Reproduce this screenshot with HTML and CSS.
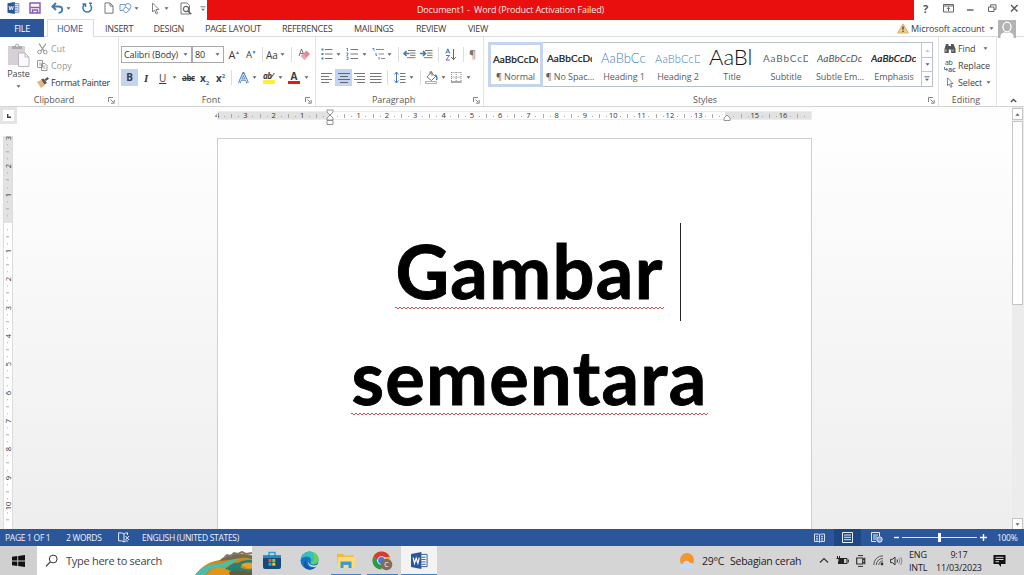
FILE: index.html
```
<!DOCTYPE html>
<html lang="en">
<head>
<meta charset="utf-8">
<title>Document1 - Word</title>
<link rel="stylesheet" href="styles.css">
</head>
<body>
<svg class="defs" width="0" height="0">
  <defs>
    <symbol id="dd" viewBox="0 0 5 3"><path d="M.5.3h4L2.500 2.700z" fill="#666"/></symbol>
    <symbol id="launch" viewBox="0 0 7 7"><path d="M.5 5V.5H5M2.500 2.500l3 3M6.200 3v3.200H3" fill="none" stroke="#777" stroke-width=".9"/></symbol>
    <symbol id="word" viewBox="0 0 18 18"><path d="M9 2.500h8v13H9z" fill="#fff" stroke="#2b579a"/><path d="M11 5.500h4.500M11 8h4.500M11 10.500h4.500M11 13h4.500" stroke="#2b579a"/><path d="M0 2l11-2v18L0 16z" fill="#2b579a"/><path d="M2.300 6l1.400 6 1.800-5.500L7.300 12l1.400-6" fill="none" stroke="#fff" stroke-width="1.300"/></symbol>
  </defs>
</svg>
<div class="app">
  <header class="titlebar">
    <div class="qat">
      <svg width="13" height="12"><use href="#word"/></svg>
      <svg width="12" height="12" viewBox="0 0 12 12"><path d="M1 1h10v10H1z" fill="#fff" stroke="#8a5aa8" stroke-width="1.500"/><path d="M1.500 5.500h9M3.500 11V8h5v3" fill="none" stroke="#8a5aa8" stroke-width="1.500"/></svg>
      <svg width="13" height="12" viewBox="0 0 13 12"><path d="M1.500 4.500h6c5 0 5 6 0 6.300M5 1L1.300 4.500 5 8" fill="none" stroke="#3c78b8" stroke-width="1.800"/></svg>
      <svg width="5" height="3"><use href="#dd"/></svg>
      <svg width="12" height="12" viewBox="0 0 12 12"><path d="M3.800 2.200A4.300 4.300 0 1 0 9 2.500M1.500 2h3v3M8 1.200h3" fill="none" stroke="#3c78b8" stroke-width="1.500"/></svg>
      <svg width="10" height="12" viewBox="0 0 10 12"><path d="M1 .9h5l3 3v7.300H1zM6 1v3h3" fill="#fff" stroke="#777"/></svg>
      <svg width="14" height="12" viewBox="0 0 14 12"><path d="M1 2.500h7v6H1z" fill="#fff" stroke="#6c9bce"/><circle cx="9" cy="4.500" r="3" fill="#fff" stroke="#6c9bce"/><path d="M7 5l3.500 3L7 11 3.500 8z" fill="#fff" stroke="#6c9bce"/></svg>
      <svg width="5" height="3"><use href="#dd"/></svg>
      <svg width="9" height="13" viewBox="0 0 9 13"><path d="M1.500 1v9l2-2 1.700 4 1.500-.7L5 7.500h3z" fill="#fff" stroke="#777" stroke-width=".9"/></svg>
      <svg width="5" height="3"><use href="#dd"/></svg>
      <svg width="12" height="13" viewBox="0 0 12 13"><path d="M1 1h6l2.500 2.500V12H1z" fill="#fff" stroke="#777"/><circle cx="6" cy="7" r="2.600" fill="#fff" stroke="#666" stroke-width="1.200"/><path d="M8 9l3.300 3.300" stroke="#666" stroke-width="1.600"/></svg>
      <svg class="more" width="6" height="6" viewBox="0 0 6 6"><path d="M.5.8h5" stroke="#777"/><path d="M1 2.800h4L3 5z" fill="#777"/></svg>
    </div>
    <div class="caption"><span>Document1 -&nbsp; Word (Product Activation Failed)</span></div>
    <div class="winbtns">
      <b>?</b>
      <svg width="11" height="9" viewBox="0 0 11 9"><path d="M.5.5h10v7.500H.5zM.5 2h10M5.500 7V3.500M3.800 5l1.700-1.600L7.200 5" fill="none" stroke="#666"/></svg>
      <svg width="7" height="9" viewBox="0 0 7 9"><path d="M0 6h6.500" stroke="#666" stroke-width="1.500"/></svg>
      <svg width="9" height="9" viewBox="0 0 9 9"><path d="M.5 3h5.500v4.500H.5zM2.500 3V.8h5.500v4.500H6" fill="none" stroke="#666"/></svg>
      <svg width="9" height="9" viewBox="0 0 9 9"><path d="M1 1l6.500 6.500M7.500 1L1 7.500" stroke="#555" stroke-width="1.400"/></svg>
    </div>
  </header>

  <nav class="tabs">
    <span class="file">FILE</span><span class="home">HOME</span><span>INSERT</span><span>DESIGN</span><span>PAGE LAYOUT</span><span>REFERENCES</span><span>MAILINGS</span><span>REVIEW</span><span>VIEW</span>
    <div class="account">
      <svg width="12" height="11" viewBox="0 0 12 11"><path d="M6 .8L11.400 10H.6z" fill="#f0c987" stroke="#dfb269"/><path d="M6 3.500v3.300M6 7.800v1.300" stroke="#333" stroke-width="1.200"/></svg>
      <span>Microsoft account</span>
      <svg width="5" height="3"><use href="#dd"/></svg>
      <svg class="avatar" width="18" height="18" viewBox="0 0 18 18"><path d="M0 0h18v18H0z" fill="#b4b4b4"/><ellipse cx="9" cy="7" rx="4" ry="4.800" fill="#b4b4b4" stroke="#fff" stroke-width="1.300"/><path d="M2.500 18v-2c0-2 1.500-3 4-3.800 1.500 1 3.500 1 5 0 2.500.8 4 1.800 4 3.800v2z" fill="#fff"/></svg>
    </div>
  </nav>

  <section class="ribbon">
    <div class="group clipboard">
      <div class="body">
        <div class="paste">
          <svg width="23" height="24" viewBox="0 0 23 24"><path d="M1 3h17v19H1z" fill="#d5d1d5"/><path d="M5 6V3h3c0-3 4-3 4 0h3v3z" fill="#aaa"/><circle cx="10" cy="2.800" r="1" fill="#fff"/><path d="M11.500 10h6.500l4 4v9.500H11.500z" fill="#fbf8fd" stroke="#bdb6bf"/><path d="M18 10v4h4" fill="none" stroke="#bdb6bf"/></svg>
          <span>Paste</span>
          <svg width="5" height="3"><use href="#dd"/></svg>
        </div>
        <ul class="clips">
          <li class="off"><svg width="11" height="12" viewBox="0 0 11 12"><path d="M2 .5l5 7.500M9 .5L4 8" stroke="#999" stroke-width="1.300"/><circle cx="2.500" cy="9" r="1.800" fill="none" stroke="#999"/><circle cx="8.300" cy="9" r="1.800" fill="none" stroke="#999"/></svg><span>Cut</span></li>
          <li class="off"><svg width="11" height="11" viewBox="0 0 11 11"><path d="M.5.5h5v7h-5zM4.500 3.500h3.500l2 2v5H4.500z" fill="#fff" stroke="#999"/><path d="M2 3h2M2 5h2M6 6h2.500M6 8h2.500" stroke="#999" stroke-width=".8"/></svg><span>Copy</span></li>
          <li><svg width="12" height="11" viewBox="0 0 12 11"><path d="M0 5l4-2 4 5-4 3z" fill="#e8b478"/><path d="M4 2.500l3.500 5L10 6 6.500 1.500zM7.500 2.500L10.500 0l1.500 1.700L9 4z" fill="#555"/></svg><span>Format Painter</span></li>
        </ul>
      </div>
      <footer><span>Clipboard</span><svg width="7" height="7"><use href="#launch"/></svg></footer>
    </div>

    <div class="group font">
      <div class="body rows">
        <div class="row f1">
          <div class="combo name"><span>Calibri (Body)</span><svg width="5" height="3"><use href="#dd"/></svg></div>
          <div class="combo size"><span>80</span><svg width="5" height="3"><use href="#dd"/></svg></div>
          <span class="grow">A<sup>▲</sup></span><span class="shrink">A<sup>▼</sup></span><i class="sep"></i>
          <span class="aa">Aa</span><svg width="5" height="3"><use href="#dd"/></svg><i class="sep"></i>
          <svg width="12" height="13" viewBox="0 0 12 13"><path d="M1 8l2.500-7L6 7M2 5.500h3" fill="none" stroke="#777"/><path d="M3 8l5.500-5.500L12 6l-5.500 6z" fill="#dd8a9c"/><path d="M3 8l2.200-2.200L8.700 9.500 6.500 12z" fill="#eba5b2"/></svg>
        </div>
        <div class="row f2">
          <b class="on">B</b><em>I</em><u>U</u><svg width="5" height="3"><use href="#dd"/></svg><s>abc</s><b class="xx">x<sub>2</sub></b><b class="xx">x<sup>2</sup></b><i class="sep"></i>
          <svg width="11" height="12" viewBox="0 0 11 12"><path d="M1.200 11L5.400 1.500 9.700 11M2.800 7.800h5.200" fill="none" stroke="#4a82c2" stroke-width="2.500"/><path d="M1.400 10.600L5.400 2 9.500 10.600M2.800 7.800h5.200" fill="none" stroke="#fff" stroke-width=".8"/></svg><svg width="5" height="3"><use href="#dd"/></svg>
          <span class="mark">ab⁄</span><svg width="5" height="3"><use href="#dd"/></svg>
          <span class="color">A</span><svg width="5" height="3"><use href="#dd"/></svg>
        </div>
      </div>
      <footer><span>Font</span><svg width="7" height="7"><use href="#launch"/></svg></footer>
    </div>

    <div class="group para">
      <div class="body rows">
        <div class="row p1">
          <svg width="12" height="12" viewBox="0 0 12 12"><path d="M4 1.500h7.500M4 6h7.500M4 10.500h7.500" stroke="#777"/><path d="M.5.500h2v2h-2zM.5 5h2v2h-2zM.5 9.500h2v2h-2z" fill="#4a82c2"/></svg><svg width="5" height="3"><use href="#dd"/></svg>
          <svg width="12" height="12" viewBox="0 0 12 12"><path d="M4.500 1.500H12M4.500 6H12M4.500 10.500H12" stroke="#777"/><path d="M.5.5h1V3M.5 5h1.500v1L.7 7.200H2.200M.5 9h1.500v2.400H.5" fill="none" stroke="#4a82c2"/></svg><svg width="5" height="3"><use href="#dd"/></svg>
          <svg width="13" height="12" viewBox="0 0 13 12"><path d="M4 1.500h8M6.500 6h5.500M9 10.500h4" stroke="#888"/><path d="M.5.500h1.500v2.200M4 5v2.500h1M7 9v2.500" fill="none" stroke="#4a82c2"/></svg><svg width="5" height="3"><use href="#dd"/></svg><i class="sep"></i>
          <svg width="13" height="10" viewBox="0 0 13 10"><path d="M5 1.500h7.500M7 4h5.500M7 6.300h5.500M4 8.700h8.500" stroke="#777"/><path d="M6.500 4.500H1.500M3.500 2L1 4.500 3.500 7" fill="none" stroke="#3c78b8" stroke-width="1.500"/></svg>
          <svg width="13" height="10" viewBox="0 0 13 10"><path d="M5 1.500h7.500M7 4h5.500M7 6.300h5.500M4 8.700h8.500" stroke="#777"/><path d="M0 4.500h5M3 2l2.500 2.500L3 7" fill="none" stroke="#3c78b8" stroke-width="1.500"/></svg><i class="sep"></i>
          <svg width="12" height="13" viewBox="0 0 12 13"><path d="M.8 5.500L2.800.8l2 4.700M1.500 4h2.600" fill="none" stroke="#3c78b8"/><path d="M1 7.500h3.500L1 12h3.800" fill="none" stroke="#8a5aa8"/><path d="M8.500 1v10.500M6.200 9l2.300 2.500L10.800 9" fill="none" stroke="#666"/></svg><i class="sep"></i>
          <span class="pil">¶</span>
        </div>
        <div class="row p2">
          <svg width="12" height="10" viewBox="0 0 12 10"><path d="M0 .5h11M0 3.500h8M0 6.500h11M0 9.500h8" stroke="#777"/></svg>
          <span class="on"><svg width="12" height="10" viewBox="0 0 12 10"><path d="M0 .5h12M2 3.500h8M0 6.500h12M2 9.500h8" stroke="#666"/></svg></span>
          <svg width="12" height="10" viewBox="0 0 12 10"><path d="M0 .5h11M3 3.500h8M0 6.500h11M3 9.500h8" stroke="#777"/></svg>
          <svg width="12" height="10" viewBox="0 0 12 10"><path d="M0 .5h11.500M0 3.500h11.500M0 6.500h11.500M0 9.500h11.500" stroke="#777"/></svg><i class="sep"></i>
          <svg width="12" height="13" viewBox="0 0 12 13"><path d="M2.500 1v11M.5 3.500l2-2.500 2 2.500M.5 9.500l2 2.500 2-2.500" fill="none" stroke="#3c78b8"/><path d="M6 2.500h5.500M6 5.500h5.500M6 8.500h5.500M6 11.500h5.500" stroke="#777"/></svg><svg width="5" height="3"><use href="#dd"/></svg><i class="sep"></i>
          <svg width="13" height="13" viewBox="0 0 13 13"><path d="M2 6l4-4.500 4.500 4L6.500 9.500zM5 3V.8h2V5" fill="#fff" stroke="#777"/><path d="M10 4c2.500 1 2 4 1.500 5" fill="none" stroke="#3c78b8" stroke-width="1.400"/><path d="M.5 10.500h11v2H.5z" fill="#fff" stroke="#999" stroke-width=".8"/></svg><svg width="5" height="3"><use href="#dd"/></svg>
          <svg width="11" height="11" viewBox="0 0 11 11"><path d="M.5.5h9.500M.5 5.200h9.500M.5 0v10M5.200 0v10M10 0v10" fill="none" stroke="#888" stroke-dasharray="1 1"/><path d="M0 10h10.500" stroke="#555"/></svg><svg width="5" height="3"><use href="#dd"/></svg>
        </div>
      </div>
      <footer><span>Paragraph</span><svg width="7" height="7"><use href="#launch"/></svg></footer>
    </div>

    <div class="group styles">
      <div class="body">
        <div class="gallery">
          <div class="st sel"><p class="n">AaBbCcDc</p><small>¶ Normal</small></div>
          <div class="st"><p class="n">AaBbCcDc</p><small>¶ No Spac...</small></div>
          <div class="st"><p class="h1">AaBbCc</p><small>Heading 1</small></div>
          <div class="st"><p class="h2">AaBbCcD</p><small>Heading 2</small></div>
          <div class="st"><p class="t">AaBl</p><small>Title</small></div>
          <div class="st"><p class="sub">AaBbCcD</p><small>Subtitle</small></div>
          <div class="st"><p class="se">AaBbCcDc</p><small>Subtle Em...</small></div>
          <div class="st"><p class="em">AaBbCcDc</p><small>Emphasis</small></div>
          <div class="updown">
            <span><svg width="5" height="3" viewBox="0 0 5 3"><path d="M.5 2.700h4L2.500.5z" fill="#bbb"/></svg></span>
            <span><svg width="5" height="3"><use href="#dd"/></svg></span>
            <span><svg width="6" height="6" viewBox="0 0 6 6"><path d="M.5.8h5" stroke="#666"/><path d="M1 2.800h4L3 5z" fill="#666"/></svg></span>
          </div>
        </div>
      </div>
      <footer><span>Styles</span><svg width="7" height="7"><use href="#launch"/></svg></footer>
    </div>

    <div class="group editing">
      <ul class="clips">
        <li><svg width="12" height="11" viewBox="0 0 12 11"><path d="M2 1h2.500v2H7V1h2.500l2 5v4H7.200V6.500H4.800V10H.5V6z" fill="#555"/><path d="M2 6.500v2M9 6.500v2" stroke="#fff" stroke-width=".8"/></svg><span>Find</span><svg width="5" height="3"><use href="#dd"/></svg></li>
        <li><span class="abac"><i>ab</i><b><svg width="4" height="5" viewBox="0 0 4 5"><path d="M.5 0v2.500h3M2.300 1l1.400 1.500L2.300 4" fill="none" stroke="#4c79ac" stroke-width=".9"/></svg>ac</b></span><span>Replace</span></li>
        <li><svg width="12" height="11" viewBox="0 0 12 11"><path d="M3.500.8v8l1.700-1.700 1.500 3.200 1.300-.6-1.500-3.200H9z" fill="#fff" stroke="#777" stroke-width=".9"/></svg><span>Select</span><svg width="5" height="3"><use href="#dd"/></svg></li>
      </ul>
      <footer><span>Editing</span></footer>
    </div>
    <div class="collapse"><svg width="7" height="5" viewBox="0 0 7 5"><path d="M.8 4l2.700-2.600L6.200 4" fill="none" stroke="#555" stroke-width="1.400"/></svg></div>
  </section>

  <main class="work">
    <div class="left">
      <div class="tabstop"><span><svg width="4" height="4" viewBox="0 0 4 4"><path d="M.7 0v3.300H4" fill="none" stroke="#444" stroke-width="1.400"/></svg></span></div>
      <div class="vruler"><span>3</span><span>2</span><span>1</span><span></span><span>1</span><span>2</span><span>3</span><span>4</span><span>5</span><span>6</span><span>7</span><span>8</span><span>9</span><span>10</span></div>
    </div>
    <div class="center">
      <div class="hruler">
        <div class="nums"><span>4</span><span>3</span><span>2</span><span>1</span><span></span><span>1</span><span>2</span><span>3</span><span>4</span><span>5</span><span>6</span><span>7</span><span>8</span><span>9</span><span>10</span><span>11</span><span>12</span><span>13</span><span></span><span>15</span><span>16</span><span class="end"></span></div>
        <svg class="indent" width="8" height="17" viewBox="0 0 8 17"><path d="M1 1h6v2L4 6 1 3zM4 6l3 3v2H1V9zM1 11.500h6v4H1z" fill="#fff" stroke="#888" stroke-width=".9"/></svg>
        <svg class="rindent" width="8" height="8" viewBox="0 0 8 8"><path d="M4 1l3 3v2.500H1V4z" fill="#fff" stroke="#888" stroke-width=".9"/></svg>
      </div>
      <article class="page">
        <p class="l1"><span class="spell">Gambar</span><i class="caret"></i></p>
        <p class="l2"><span class="spell">sementara</span></p>
      </article>
    </div>
    <div class="scroll">
      <span class="btn"><svg width="5" height="3" viewBox="0 0 5 3"><path d="M.3 2.800h4.400L2.500.3z" fill="#666"/></svg></span>
      <span class="thumb"></span>
      <span class="btn"><svg width="5" height="3"><use href="#dd"/></svg></span>
    </div>
  </main>

  <div class="status">
    <span>PAGE 1 OF 1</span><span>2 WORDS</span>
    <svg width="12" height="11" viewBox="0 0 12 11"><path d="M6 2C4 .8 2.500.8.600.8v8c2 0 3.600 0 5.400 1.200V2c1-.8 2-1.200 3.500-1.200V3M6 10c1-.8 2-1 4-1M7.500 4l3.500 4M11 4L7.500 8" fill="none" stroke="#e8effa"/></svg>
    <span class="lang">ENGLISH (UNITED STATES)</span>
    <svg width="11" height="10" viewBox="0 0 11 10"><path d="M.5 1h4l1 1 1-1h4v7.500h-4l-1 1-1-1h-4zM5.500 2v7M2 3.300h2M2 5.300h2M2 7h2M7 3.300h2M7 5.300h2M7 7h2" fill="none" stroke="#e8effa" stroke-width=".9"/></svg>
    <span class="view"><svg width="11" height="11" viewBox="0 0 11 11"><path d="M.5.5h10v10H.5zM2 3h7M2 5.300h7M2 7.700h7" fill="none" stroke="#e8effa"/></svg></span>
    <svg width="12" height="11" viewBox="0 0 12 11"><path d="M5 9.500H.5v-9h8V4M2 3h5M2 5h4M2 7h3" fill="none" stroke="#e8effa"/><circle cx="8.500" cy="7.500" r="2.700" fill="#7f9dcc" stroke="#e8effa"/></svg>
    <svg width="5" height="5" viewBox="0 0 5 5"><path d="M0 2.500h5" stroke="#fff" stroke-width="1.400"/></svg>
    <div class="zoom"><i></i></div>
    <svg width="7" height="7" viewBox="0 0 7 7"><path d="M0 3.500h7M3.500 0v7" stroke="#fff" stroke-width="1.400"/></svg>
    <span class="pct">100%</span>
  </div>

  <footer class="taskbar">
    <div class="start"><svg width="13" height="12" viewBox="0 0 13 12"><path d="M0 1.700L5.300 1v4.600H0zM6.200.9L13 0v5.600H6.200zM0 6.400h5.300V11L0 10.300zM6.200 6.400H13V12l-6.800-.9z" fill="#111"/></svg></div>
    <div class="search">
      <svg width="14" height="13" viewBox="0 0 14 13"><circle cx="8.200" cy="5" r="3.900" fill="none" stroke="#333"/><path d="M5.300 7.800L1 12.300" stroke="#333" stroke-width="1.200"/></svg>
      <span>Type here to search</span>
      <svg class="art" width="57" height="24" viewBox="0 0 57 24"><path d="M0 24C8 13 18 10 25 9c5-5 16-8 32-5v20z" fill="#c88a25"/><path d="M24 10c7-7 20-9 33-5v3c-9-3-16 0-23 1z" fill="#746c4c"/><path d="M0 24C7 16 14 13 24 13c8-1 12-6 21-5-7 2-8 6-15 8-8 2-17-1-19 8z" fill="#48bfae"/><path d="M12 24c4-7 10-8 18-7 4 1 5 4 9 7z" fill="#df961d"/><path d="M30 18c4-2 7-7 13-6 5-3 8-3 14-3v3c-6-1-9 2-12 4 3 2 8 3 12 2v6H42c-3-1-5-5-12-6z" fill="#277f76"/><path d="M46 14c4-3 7-2 11-2v5c-4 1-7-1-11-3z" fill="#e7a329"/><path d="M34 21c6-3 16 0 23 0v3H35z" fill="#655b34"/><path d="M29 7l3-3 4 1 3-3 4 1 4-2 4 2 6-1" fill="none" stroke="#81796d" stroke-width="2"/></svg>
    </div>
    <div class="apps">
      <div><svg width="18" height="19" viewBox="0 0 18 19"><path d="M6 5V1.500h6V5" fill="none" stroke="#29a3dc" stroke-width="1.500"/><path d="M0 4.500h18V16q0 2-2 2H2q-2 0-2-2z" fill="#164a78"/><path d="M0 4.500h18V7H0z" fill="#2c88be"/><path d="M5.500 8h3v3h-3z" fill="#f05a28"/><path d="M9.300 8h3v3h-3z" fill="#8cc63f"/><path d="M5.500 11.700h3v3h-3z" fill="#2aa9e0"/><path d="M9.300 11.700h3v3h-3z" fill="#fcc419"/></svg></div>
      <div><svg width="19" height="19" viewBox="0 0 19 19"><circle cx="9.500" cy="9.500" r="9" fill="#1575c5"/><path d="M.8 8C2 2.500 6 .5 9.500.5c5 0 9 3.500 9 8 0 3-2.300 4.800-5 4.800-3 0-3.500-1.300-2.800-2.300C12 8.500 10 5.500 7 5.500 4 5.500 2 6.500.8 8z" fill="#35c1b9"/><path d="M12 1c4 1 6.500 4 6.500 7.500 0 3-2.300 4.800-5 4.800-2 0-3-.6-3-1.500 4 0 5-6 1.500-10.800z" fill="#65d15a"/><path d="M7 8c-2 3-1 7 3 8.500 2 .8 4.500.3 6.500-1.300C14 18.800 9 20 5 17 3 14 4 10 7 8z" fill="#1357a3"/><path d="M8.800 8.500c-1.500 2 0 6 5 6 1 0 2.500-.3 3.700-1l-1 2c-6 2-10-2-7.700-7z" fill="#d5dfe4"/></svg></div>
      <div class="run"><svg width="18" height="16" viewBox="0 0 18 16"><path d="M0 1h6l1.500 1.500H17V15H0z" fill="#eebb3f"/><path d="M1 4h17v11H0z" fill="#fbdc7b"/><path d="M3.500 15V8.500h11V15h-3v-3h-5v3z" fill="#3f9ad2"/></svg></div>
      <div class="run"><svg width="21" height="20" viewBox="0 0 21 20"><circle cx="9.500" cy="9.500" r="9" fill="#e2b92f"/><path d="M1.700 5A9 9 0 0 1 17.800 6H9.500L6 11z" fill="#d93a2f"/><path d="M1.700 5a9 9 0 0 0 7 13.500L12 13 6.500 12z" fill="#2c9a4b"/><circle cx="9.500" cy="9.500" r="4.300" fill="#fff"/><circle cx="9.500" cy="9.500" r="3.400" fill="#3d7de0"/><circle cx="14.500" cy="13.500" r="5.800" fill="#836a62"/><text x="12.300" y="16.300" class="badge">C</text></svg></div>
      <div class="run cur"><svg width="17" height="17"><use href="#word"/></svg></div>
    </div>
    <div class="tray">
      <svg width="18" height="18" viewBox="0 0 18 18"><circle cx="8" cy="8" r="7" fill="#f3962b"/><path d="M5 17c-5 0-5-5-1-5.500C5 7.500 10 8 11 11c5-.5 6 6 1 6z" fill="#c9d9f3"/></svg>
      <span class="temp">29°C</span><span class="wx">Sebagian cerah</span>
      <svg width="10" height="7" viewBox="0 0 10 7"><path d="M1 5.500l4-4 4 4" fill="none" stroke="#333" stroke-width="1.200"/></svg>
      <svg width="13" height="9" viewBox="0 0 13 9"><path d="M3 2.500h8v5H3z" fill="#222" stroke="#222"/><path d="M8 3h2.500v4H8z" fill="#ccc"/><path d="M12.300 3.500v3" stroke="#222"/><path d="M1.500 0v3M3.500 0v3M.5 2.500h4v2l-2 1v2.500" fill="none" stroke="#222"/></svg>
      <svg width="10" height="12" viewBox="0 0 10 12"><path d="M2 .6h5M2 11.400h5" stroke="#333"/><path d="M.7 3h6v6h-6zM6.700 5l2-1.500v5L6.700 7z" fill="none" stroke="#333" stroke-width="1.200"/></svg>
      <svg width="11" height="11" viewBox="0 0 11 11"><path d="M.8 10A9 9 0 0 1 10 .8M3.300 10A6.500 6.500 0 0 1 10 3.500M5.800 10A4 4 0 0 1 10 6" fill="none" stroke="#555"/><circle cx="9" cy="9" r="1.400" fill="#333"/></svg>
      <svg width="13" height="10" viewBox="0 0 13 10"><path d="M.6 3.300h2L5 1v8L2.600 6.700h-2z" fill="none" stroke="#333"/><path d="M7 3.500q1 1.500 0 3" fill="none" stroke="#333"/><path d="M8.800 2.200q2 2.800 0 5.600M10.700 1q2.700 4 0 8" fill="none" stroke="#888"/></svg>
      <div class="two lng"><span>ENG</span><span>INTL</span></div>
      <div class="two clock"><span class="time">9:17</span><span class="date">11/03/2023</span></div>
      <svg width="13" height="13" viewBox="0 0 13 13"><path d="M.5 1h12v9H8v3L5.500 10h-5z" fill="#111"/><path d="M2.500 3.300h8M2.500 5.500h8M2.500 7.700h3.500" stroke="#d5d5d5"/></svg>
    </div>
  </footer>
</div>
</body>
</html>
```
FILE: styles.css
```
* { box-sizing: border-box; margin: 0; padding: 0; }
body { font: 9px/12px "Open Sans", "Noto Sans", sans-serif; color: #3c3c3c; overflow: hidden; background: #fff; }
svg { display: block; flex: none; }
.defs { position: absolute; }
span { white-space: nowrap; }
ul { list-style: none; }
.app { width: 1024px; height: 575px; display: grid; grid-template-rows: 19px 18px 70px 422px 17px 29px; }

.titlebar { display: grid; grid-template-columns: 207px 707px 110px; }
.qat { display: grid; grid-template-columns: 22px 22px 15px 15px 23px 15px 15px 17px 13px 16px 20px 7px; padding-left: 7px; align-items: center; height: 16px; }
.more { margin-top: 2px; }
.caption { background: #ea0f0f; color: #ffe9e4; text-align: center; line-height: 20px; padding-right: 100px; letter-spacing: -.14px; }
.winbtns { display: grid; grid-template-columns: 20px 24px 21px 22px 9px; padding-left: 9px; align-items: center; height: 17px; color: #555; }
.winbtns b { font-size: 11px; }

.tabs { display: grid; grid-template-columns: 44px 61px 48.500px 51.500px 77px 72px 62px 52px 429px 127px; line-height: 19px; border-bottom: 1px solid #ddd; letter-spacing: -.28px; }
.file { background: #2b579a; color: #fff; text-align: center; height: 18px; }
.home { color: #2b579a; border: 1px solid #ddd; border-bottom: 0; background: #fff; width: 47px; height: 18px; margin-left: 3px; padding-left: 9px; line-height: 17px; }
.account { display: grid; grid-template-columns: 14px 78px 9px 18px; align-items: center; letter-spacing: -.1px; height: 18px; }

.ribbon { display: grid; grid-template-columns: 119px 197px 168px 455px 58px 27px; border-bottom: 1px solid #d4d4d4; }
.group { display: grid; grid-template-rows: 57px 12px; border-right: 1px solid #e3e3e3; height: 69px; }
.group footer { display: grid; grid-template-columns: 1fr 7px; text-align: center; align-items: center; padding-right: 3px; color: #5a5a5a; letter-spacing: -.05px; }
.font footer span, .para footer span, .styles footer span { padding-right: 2px; }
.body { display: flex; }
.paste { width: 37px; display: flex; flex-direction: column; align-items: center; padding-top: 6px; }
.paste span { margin: 1px 0 5px; color: #444; letter-spacing: -.1px; }
.clips { padding-top: 3px; display: grid; grid-template-rows: 17px 17px 17px; }
.clips li { display: grid; grid-template-columns: 14px auto auto; align-items: center; justify-content: start; letter-spacing: -.28px; color: #333; }
.clips .off { color: #999; letter-spacing: -.1px; }
.rows { flex-direction: column; padding: 9px 0 0 5px; gap: 7px; }
.font .rows { padding-left: 2px; }
.row { display: grid; height: 16px; align-items: center; }
.sep { width: 1px; height: 15px; background: #ddd; }
.f1 { grid-template-columns: 71px 36.500px 17.500px 16px 4px 14px 11px 7px 12px; }
.combo { display: flex; align-items: center; justify-content: space-between; height: 17px; border: 1px solid #aaa; padding: 0 3px 0 2px; color: #333; letter-spacing: -.1px; }
.combo.size { width: 32px; }
.grow, .shrink { font-size: 11px; letter-spacing: -.5px; }
.shrink { font-size: 9.500px; }
.row sup, .row sub { font-size: 5px; line-height: 0; color: #3c78b8; }
.f2 sup, .f2 sub { font-size: 6px; }
.aa { font-size: 10px; }
.f2 { grid-template-columns: 22px 16px 13px 10px 18px 16px 15px 7px 14px 11px 15px 10px 16px 5px; font-size: 10px; }
.f2 .on { background: #c2d4f0; width: 17px; height: 17px; text-align: center; line-height: 17px; }
.f2 em { font-family: "Liberation Serif", serif; font-weight: bold; font-size: 11px; padding-left: 1px; }
.f2 s { font-size: 8px; font-weight: bold; letter-spacing: -.4px; }
.mark { font-size: 8px; line-height: 8px; height: 12px; width: 12px; border-bottom: 4px solid #ffef3a; font-style: italic; font-weight: bold; letter-spacing: -.4px; }
.color { font-size: 10px; font-weight: bold; line-height: 9px; width: 12px; height: 12px; text-align: center; border-bottom: 3px solid #e01b1b; }
.p1 { grid-template-columns: 15px 10px 16px 10px 15px 11px 5px 17px 18px 7px 18px 6px 8px; }
.p2 { grid-template-columns: 14px 19px 16px 17px 7px 15px 11px 5px 16px 10px 15px 5px; }
.p2 .on { background: #c2d4f0; width: 17px; height: 17px; display: grid; place-items: center; }
.pil { font-size: 11px; color: #777; }

.styles .body { padding: 5px 0 0 4px; }
.gallery { display: grid; grid-template-columns: repeat(8, 54px) 11px; width: 445px; height: 45px; border: 1px solid #b9c0cb; }
.st { display: grid; grid-template-rows: 26px 13px; padding: 1px 2px 0; overflow: hidden; text-align: center; color: #5c5c5c; }
.st p { margin-left: 2px; width: 45px; overflow: hidden; white-space: nowrap; text-align: left; color: #111; line-height: 29px; height: 26px; font-family: Lato, sans-serif; font-size: 10px; }
.st .n { letter-spacing: .1px; -webkit-text-stroke: .2px #111; }
.st small { font-size: 9px; line-height: 14px; letter-spacing: -.1px; white-space: nowrap; }
.st.sel { border: 3px solid #c5d5ee; padding: 0; margin: -1px 0 -1px -1px; grid-template-rows: 25px 13px; }
.st.sel p { margin-left: 2px; line-height: 28px; height: 25px; }
.st .h1 { font-size: 13px; color: #3f7fbd; font-weight: 300; }
.st .h2 { font-size: 11px; color: #3f7fbd; font-weight: 300; letter-spacing: .2px; }
.st .t { font-size: 22px; font-weight: 300; line-height: 25px; }
.st .sub { color: #666; letter-spacing: .8px; }
.st .se { font-style: italic; color: #555; letter-spacing: .1px; }
.st .em { font-style: italic; letter-spacing: .1px; -webkit-text-stroke: .2px #111; }
.updown { display: grid; grid-template-rows: 15px 14px 14px; border-left: 1px solid #c6c6c6; }
.updown span { display: grid; place-items: center; border-bottom: 1px solid #c6c6c6; }
.updown span:last-child { border: 0; }
.editing .clips { padding-left: 5px; }
.editing .clips li { color: #444; letter-spacing: -.12px; }
.editing .clips li > svg:last-child { margin-left: 4px; }
.editing .clips li:first-child > svg:last-child { margin-left: 8px; }
.editing footer { grid-template-columns: 1fr; }
.abac { display: grid; grid-template-rows: 7px 7px; font-size: 7px; line-height: 7px; letter-spacing: -.3px; }
.abac i { font-style: normal; padding-left: 1px; }
.abac b { color: #4c79ac; display: flex; align-items: center; }
.collapse { padding: 61px 0 0 13px; }

.work { display: grid; grid-template-columns: 217px 795px 12px; background: linear-gradient(#fefefe 8%, #eee); overflow: hidden; }
.tabstop { width: 17px; height: 17px; background: #e4e4e4; padding: 3px; }
.tabstop span { display: grid; place-items: center; height: 11px; background: #fff; }
.vruler, .nums { font-size: 7.500px; line-height: 10px; color: #333; display: flex; }
.vruler { flex-direction: column; width: 10px; height: 393px; margin: 12px 0 0 3px; overflow: hidden; border: solid #ddd; border-width: 0 1px; background: linear-gradient(#e2e2e2 87px, #fff 87px); }
.vruler span { writing-mode: vertical-rl; transform: rotate(180deg); flex: none; height: 28.300px; line-height: 8px; text-align: center; width: 8px;
  background: linear-gradient(#aaa,#aaa) 3px 0/3px 1px no-repeat, linear-gradient(#aaa,#aaa) 4px 7px/1px 1px no-repeat, linear-gradient(#aaa,#aaa) 4px 21px/1px 1px no-repeat; }
.vruler span:first-child { margin-top: -12px; }
.hruler { width: 595px; height: 9px; margin-top: 4px; position: relative; background: linear-gradient(90deg, #e2e2e2 113px, #fff 113px, #fff 508px, #e2e2e2 508px); outline: 1px solid #ececec; outline-offset: -1px; }
.nums { margin-left: -14px; line-height: 9px; }
.nums span { flex: none; width: 28.300px; height: 9px; text-align: center;
  background: linear-gradient(#aaa,#aaa) 0 3px/1px 4px no-repeat, linear-gradient(#aaa,#aaa) 7px 5px/1px 1px no-repeat, linear-gradient(#aaa,#aaa) 21px 5px/1px 1px no-repeat; }
.nums span:first-child { background: linear-gradient(#aaa,#aaa) 21px 5px/1px 1px no-repeat; }
.nums .end { width: 10px; }
.indent { position: absolute; left: 109px; top: -2px; }
.rindent { position: absolute; left: 506px; top: 3px; }
.page { width: 595px; height: 392px; margin-top: 18px; background: #fff; border: 1px solid #cfcfcf; border-bottom: 0; padding: 84px 0 0 30px; color: #000; font: bold 74px/96px Lato, Carlito, sans-serif; }
.page p { height: 106px; display: flex; justify-content: center; position: relative; letter-spacing: 1.300px; -webkit-text-stroke: .9px #000; }
.spell { height: 88px; background: repeating-linear-gradient(90deg, #dd4b4b 0 2px, transparent 2px 4px) 0 84px/100% 1px no-repeat, repeating-linear-gradient(90deg, transparent 0 2px, #dd4b4b 2px 4px) 0 85px/100% 1px no-repeat; }
.caret { position: absolute; left: 432px; top: 0; width: 1px; height: 98px; background: #222; }
.scroll { display: grid; grid-template-rows: 12px 396px 12px; row-gap: 1px; padding: 1px 1px 0 0; align-content: start; background: #ececec; }
.btn { border: 1px solid #c4c4c4; background: #fff; display: grid; place-items: center; }
.thumb { border: 1px solid #c4c4c4; background: #fff; height: 184px; }

.status { background: #2b579a; color: #eef3fb; display: grid; align-items: center; padding-left: 5px; letter-spacing: -.3px; font-size: 8.500px;
  grid-template-columns: 61px 52px 24px 672px 20px 37px 23px 8px 78px 17px 22px; }
.view { width: 27px; height: 17px; background: #1e4680; display: grid; place-items: center; }
.zoom { width: 75px; height: 9px; background: linear-gradient(#dbe5f5,#dbe5f5) 0 4px/100% 1px no-repeat; display: grid; place-items: center; }
.zoom i { width: 3px; height: 9px; background: #fff; }

.taskbar { background: #d5d5d5; display: grid; grid-template-columns: 37px 215px 185px 1fr; color: #222; }
.start { display: grid; place-items: center; background: #d0d0d0; }
.search { background: #fff; display: grid; grid-template-columns: 21px 129px 57px; padding-left: 8px; align-items: center; font-size: 11px; letter-spacing: -.28px; color: #444; }
.art { align-self: end; }
.apps { display: grid; grid-template-columns: 39px 37px 36px 37px 36px; }
.apps > div { display: grid; place-items: center; padding-top: 1px; border-bottom: 1px solid transparent; }
.apps .run { border-color: #3b80c6; margin: 0 3px; }
.apps .cur { background: #f3f3f3; margin: 0; }
.badge { font: 7px "Open Sans", sans-serif; fill: #fff; }
.tray { display: grid; grid-template-columns: 23px 28px 89px 17px 20px 17px 17px 19px 27px 57px 13px; padding-left: 242px; align-items: center; font-size: 10.500px; letter-spacing: -.25px; }
.two { display: grid; grid-template-rows: 13px 12px; line-height: 13px; font-size: 9px; letter-spacing: -.2px; }
.clock { width: 44px; justify-items: center; }
```
